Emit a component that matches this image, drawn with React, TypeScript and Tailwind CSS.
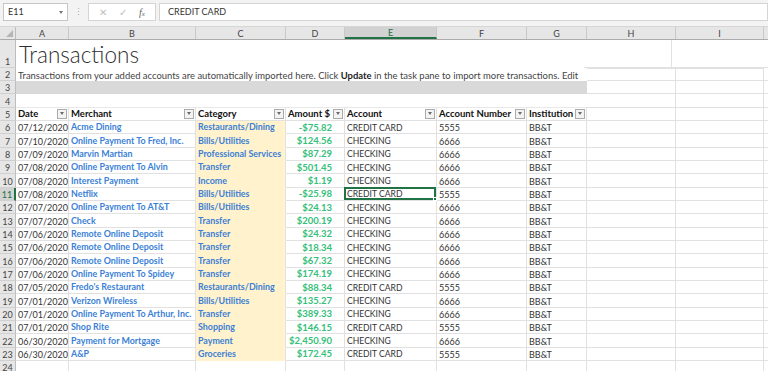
import { ReactNode } from "react";

type Tx = [string, string, string, string, string, string, string];

const data: Tx[] = [
  ["07/12/2020", "Acme Dining", "Restaurants/Dining", "-$75.82", "CREDIT CARD", "5555", "BB&T"],
  ["07/10/2020", "Online Payment To Fred, Inc.", "Bills/Utilities", "$124.56", "CHECKING", "6666", "BB&T"],
  ["07/09/2020", "Marvin Martian", "Professional Services", "$87.29", "CHECKING", "6666", "BB&T"],
  ["07/08/2020", "Online Payment To Alvin", "Transfer", "$501.45", "CHECKING", "6666", "BB&T"],
  ["07/08/2020", "Interest Payment", "Income", "$1.19", "CHECKING", "6666", "BB&T"],
  ["07/08/2020", "Netflix", "Bills/Utilities", "-$25.98", "CREDIT CARD", "5555", "BB&T"],
  ["07/07/2020", "Online Payment To AT&T", "Bills/Utilities", "$24.13", "CHECKING", "6666", "BB&T"],
  ["07/07/2020", "Check", "Transfer", "$200.19", "CHECKING", "6666", "BB&T"],
  ["07/06/2020", "Remote Online Deposit", "Transfer", "$24.32", "CHECKING", "6666", "BB&T"],
  ["07/06/2020", "Remote Online Deposit", "Transfer", "$18.34", "CHECKING", "6666", "BB&T"],
  ["07/06/2020", "Remote Online Deposit", "Transfer", "$67.32", "CHECKING", "6666", "BB&T"],
  ["07/06/2020", "Online Payment To Spidey", "Transfer", "$174.19", "CHECKING", "6666", "BB&T"],
  ["07/05/2020", "Fredo's Restaurant", "Restaurants/Dining", "$88.34", "CREDIT CARD", "5555", "BB&T"],
  ["07/01/2020", "Verizon Wireless", "Bills/Utilities", "$135.27", "CHECKING", "6666", "BB&T"],
  ["07/01/2020", "Online Payment To Arthur, Inc.", "Transfer", "$389.33", "CHECKING", "6666", "BB&T"],
  ["07/01/2020", "Shop Rite", "Shopping", "$146.15", "CREDIT CARD", "5555", "BB&T"],
  ["06/30/2020", "Payment for Mortgage", "Payment", "$2,450.90", "CHECKING", "6666", "BB&T"],
  ["06/30/2020", "A&P", "Groceries", "$172.45", "CREDIT CARD", "5555", "BB&T"],
];

const W = ["w-[53px]", "w-[127px]", "w-[90px]", "w-[59px]", "w-[92px]", "w-[90px]", "w-[60px]", "w-[89px]", "w-[88px]"];
const LETTERS = ["A", "B", "C", "D", "E", "F", "G", "H", "I"];
const GRID = "border-r border-b border-[#e1e1e1]";

function RowNum({ n, h, active }: { n: number; h: string; active?: boolean }) {
  return (
    <div
      className={`w-[16px] shrink-0 ${h} flex items-end justify-center pb-[1px] text-[9px] leading-none border-b border-b-[#d0d0d0] ${
        active ? "bg-[#d2d2d2] text-[#217346] border-r-2 border-r-[#217346]" : "bg-[#e6e6e6] text-[#444] border-r border-r-[#bdbdbd]"
      }`}
    >
      {n}
    </div>
  );
}

function Filter() {
  return (
    <span className="ml-auto mr-[1px] w-[10px] h-[10px] shrink-0 border border-[#ababab] bg-[#f3f3f3] flex items-center justify-center">
      <span className="w-0 h-0 border-l-[2.5px] border-r-[2.5px] border-t-[3px] border-l-transparent border-r-transparent border-t-[#6b6b6b]" />
    </span>
  );
}

function Cell({ w, className = "", children }: { w: string; className?: string; children?: ReactNode }) {
  return <div className={`${w} shrink-0 h-full flex items-end pb-[1px] pl-[2px] leading-none whitespace-nowrap overflow-visible ${className}`}>{children}</div>;
}

function Filler({ grid = true }: { grid?: boolean }) {
  return <div className={`flex-1 h-full ${grid ? "border-b border-[#e1e1e1]" : ""}`} />;
}

export default function App() {
  const rowH = "h-[13.33px]";
  return (
    <div className="w-[768px] h-[371px] overflow-hidden bg-white text-[#333] font-['Lato','Liberation_Sans',sans-serif]">
      {/* formula bar */}
      <div className="h-[27px] bg-[#f3f3f3] flex items-start pt-[3px] border-b border-[#d6d6d6]">
        <div className="ml-[3px] w-[65px] h-[18px] bg-white border border-[#c6c6c6] flex items-center pl-[4px] pr-[4px] text-[9px] text-[#333]">
          E11
          <span className="ml-auto w-0 h-0 border-l-[2.5px] border-r-[2.5px] border-t-[3px] border-l-transparent border-r-transparent border-t-[#777]" />
        </div>
        <div className="w-[20px] h-[18px] flex items-center justify-center text-[9px] text-[#aaa]">⋮</div>
        <div className="w-[68px] h-[18px] bg-white border border-[#d4d4d4] flex items-center justify-around px-[4px] text-[10px] text-[#c0c0c0]">
          <span>✕</span>
          <span>✓</span>
          <span className="italic font-['Liberation_Serif',serif] text-[10px] text-[#666]">f<span className="text-[7px]">x</span></span>
        </div>
        <div className="ml-[3px] flex-1 h-[18px] bg-white border border-[#d4d4d4] flex items-center pl-[8px] text-[9px] text-[#333]">CREDIT CARD</div>
      </div>

      {/* column headers */}
      <div className="h-[13px] flex bg-[#e6e6e6] border-b border-[#ababab]">
        <div className="w-[16px] shrink-0 h-full border-r border-[#bdbdbd] flex items-end justify-end pr-[2px] pb-[2px]">
          <svg width="7" height="7" viewBox="0 0 7 7">
            <path d="M7 0 L7 7 L0 7 Z" fill="#b5b5b5" />
          </svg>
        </div>
        {LETTERS.map((l, i) => (
          <div
            key={l}
            className={`${W[i]} shrink-0 h-full flex items-center justify-center text-[9px] leading-none border-r border-[#c8c8c8] ${
              l === "E" ? "bg-[#d2d2d2] text-[#217346] border-b-2 border-b-[#217346]" : "text-[#444]"
            }`}
          >
            {l}
          </div>
        ))}
        <div className="flex-1" />
      </div>

      {/* row 1 */}
      <div className="h-[27.7px] flex">
        <RowNum n={1} h="h-full" />
        <div className="w-[568px] shrink-0 h-full flex items-end pl-[3px] pb-[1px] text-[22.5px] font-light leading-none text-[#2f2f2f]">Transactions</div>
        <div className={`w-[88px] shrink-0 h-full ${GRID}`} />
        <Filler />
      </div>

      {/* row 2 */}
      <div className={`${rowH} flex`}>
        <RowNum n={2} h="h-full" />
        <div className="w-[571px] shrink-0 h-full flex items-end pl-[2px] pb-[1px] text-[9.45px] leading-none text-[#444] whitespace-nowrap">
          Transactions from your added accounts are automatically imported here. Click&nbsp;<b className="text-[#222]">Update</b>&nbsp;in the task pane to import more transactions. Edit
        </div>
        <div className={`w-[89px] shrink-0 h-full ${GRID} border-t border-t-[#e1e1e1]`} />
        <div className={`w-[88px] shrink-0 h-full ${GRID} border-t border-t-[#e1e1e1]`} />
        <Filler />
      </div>

      {/* row 3 */}
      <div className={`${rowH} flex`}>
        <RowNum n={3} h="h-full" />
        <div className="w-[571px] shrink-0 h-full bg-[#d9d9d9]" />
        <div className={`w-[89px] shrink-0 h-full ${GRID}`} />
        <div className={`w-[88px] shrink-0 h-full ${GRID}`} />
        <Filler />
      </div>

      {/* row 4 */}
      <div className={`${rowH} flex`}>
        <RowNum n={4} h="h-full" />
        <div className="w-[571px] shrink-0 h-full border-b border-[#e8e8e8]" />
        <div className={`w-[89px] shrink-0 h-full ${GRID}`} />
        <div className={`w-[88px] shrink-0 h-full ${GRID}`} />
        <Filler />
      </div>

      {/* row 5 header */}
      <div className={`${rowH} flex`}>
        <RowNum n={5} h="h-full" />
        {["Date", "Merchant", "Category", "Amount $", "Account", "Account Number", "Institution"].map((t, i) => (
          <Cell key={t} w={W[i]} className={`${GRID} font-bold text-[9.5px] text-[#111] items-center! pb-0!`}>
            {t}
            <Filter />
          </Cell>
        ))}
        <div className={`${W[7]} shrink-0 h-full ${GRID}`} />
        <div className={`${W[8]} shrink-0 h-full ${GRID}`} />
        <Filler />
      </div>

      {/* data rows */}
      {data.map((r, idx) => {
        const n = idx + 6;
        const active = n === 11;
        return (
          <div key={n} className={`${rowH} flex`}>
            <RowNum n={n} h="h-full" active={active} />
            <Cell w={W[0]} className={`${GRID} text-[9px]`}>{r[0]}</Cell>
            <Cell w={W[1]} className={`${GRID} text-[8.9px] font-bold text-[#3b7fd6]`}>{r[1]}</Cell>
            <Cell w={W[2]} className="bg-[#fff2cc] border-r border-[#e1e1e1] border-b border-b-transparent text-[8.9px] font-bold text-[#3b7fd6]">{r[2]}</Cell>
            <Cell w={W[3]} className={`${GRID} justify-end pr-[12px] text-[9.5px] font-bold text-[#35c079]`}>{r[3]}</Cell>
            <Cell w={W[4]} className={`${GRID} text-[8.6px] relative`}>
              {r[4]}
              {active && (
                <span className="absolute left-[-1px] top-[-1px] right-0 bottom-0 border-2 border-[#217346]">
                  <span className="absolute right-[-3px] bottom-[-3px] w-[4px] h-[4px] bg-[#217346] border border-white" />
                </span>
              )}
            </Cell>
            <Cell w={W[5]} className={`${GRID} text-[9px]`}>{r[5]}</Cell>
            <Cell w={W[6]} className={`${GRID} text-[9px]`}>{r[6]}</Cell>
            <div className={`${W[7]} shrink-0 h-full ${GRID}`} />
            <div className={`${W[8]} shrink-0 h-full ${GRID}`} />
            <Filler />
          </div>
        );
      })}

      {/* row 24 */}
      <div className={`${rowH} flex`}>
        <RowNum n={24} h="h-full" />
        {W.map((w) => (
          <div key={w} className={`${w} shrink-0 h-full ${GRID}`} />
        ))}
        <Filler />
      </div>
    </div>
  );
}
